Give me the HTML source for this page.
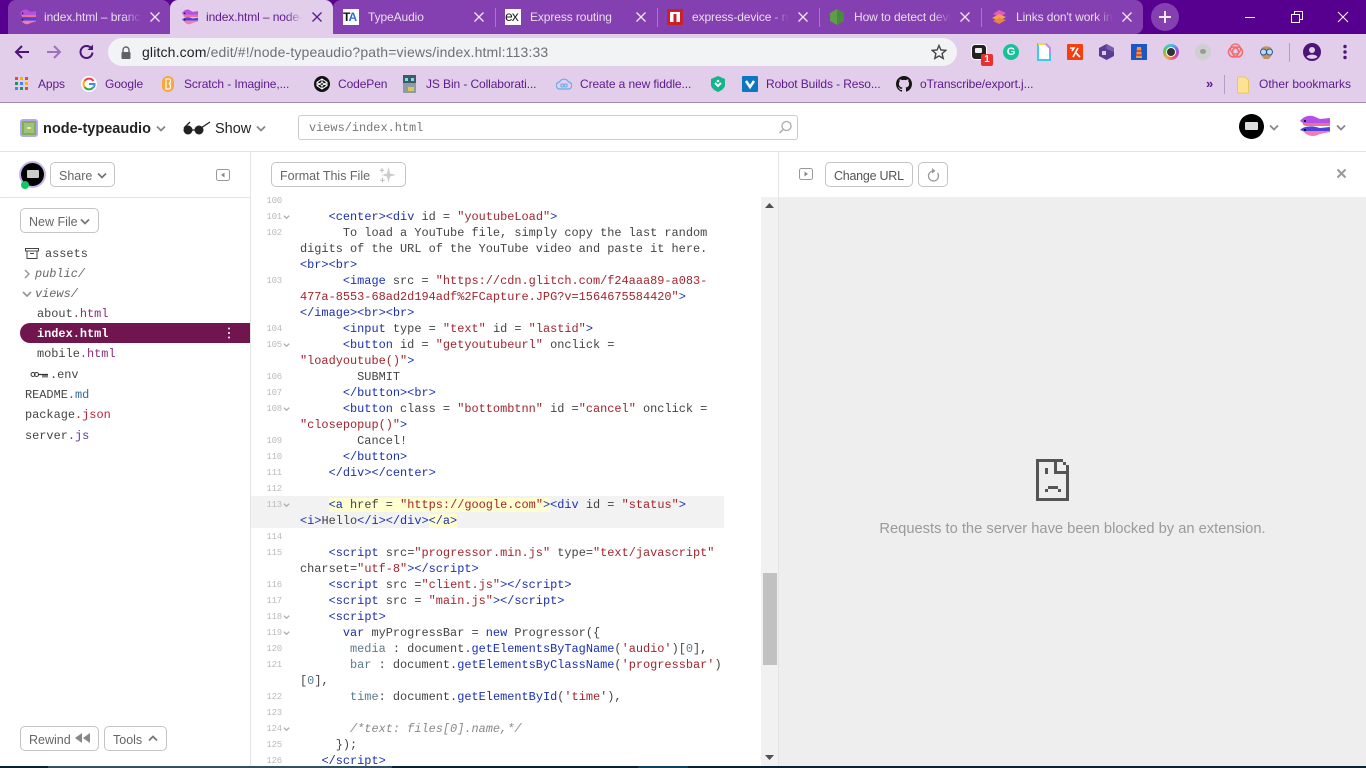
<!DOCTYPE html>
<html><head><meta charset="utf-8"><title>index.html – node-typeaudio</title>
<style>
html,body{margin:0;padding:0;width:1366px;height:768px;overflow:hidden;background:#fff;font-family:"Liberation Sans",sans-serif}
.a{position:absolute}
#frame{left:0;top:0;width:1366px;height:34px;background:#57008f}
.tab{position:absolute;top:0;height:34px;background:#8440b0}
.tt{position:absolute;top:9px;height:16px;line-height:16px;width:97px;overflow:hidden;white-space:nowrap;font-size:12px;letter-spacing:-.1px;color:#e9dcf2;-webkit-mask-image:linear-gradient(90deg,#000 82%,transparent 100%)}
.tx{position:absolute;top:10px;width:14px;height:14px}
.sep{position:absolute;top:8px;width:1px;height:19px;background:#a47cc5}
.bm{position:absolute;top:76px;height:16px;line-height:16px;font-size:12px;letter-spacing:-.1px;color:#5d1a8b;white-space:nowrap}
.btn{position:absolute;box-sizing:border-box;border:1px solid #c4c4c4;border-radius:5px;background:#fff;color:#666;font-size:12.5px;height:25px;line-height:27px;text-align:left;white-space:nowrap}
.m{position:absolute;font-family:"Liberation Mono",monospace;font-size:11.92px;line-height:16px;height:16px;white-space:pre;color:#444}
.n{position:absolute;left:251px;width:31px;text-align:right;font-family:"Liberation Mono",monospace;font-size:9px;letter-spacing:-.2px;line-height:16px;height:16px;color:#bbb}
.f{position:absolute;width:7px;height:4px;left:283px;margin-top:-1px}
.t{color:#1a2fb0}.s{color:#a3242c}.k{color:#1a2fb0}.c{color:#888;font-style:italic}.g{color:#5a7a8a}
.h{background:#ffffd0}
.fe{color:#8b2f78}.fm{color:#37639a}.fj{color:#b3223a}.fs{color:#5b3a9c}
</style></head>
<body>
<svg width="0" height="0" style="position:absolute"><defs>
<symbol id="fish" viewBox="0 0 30 22" preserveAspectRatio="none">
<path d="M0 6 C3 2 8 0 13 1 L20 4 L30 3 V8 H3 Z" fill="#b44fe8"/>
<path d="M3 8 H30 V11 H6 C4 11 2 9 3 8Z" fill="#f0708a"/>
<path d="M0 15 C3 12 8 11 14 11.500 L20 13 L30 12 V16 H3Z" fill="#4f40e0"/>
<path d="M3 16 H30 V17 L20 19 C14 22 8 22 3 16Z" fill="#f57ab0"/>
<rect x="4" y="5" width="2" height="2" fill="#111"/>
<rect x="4" y="14" width="2" height="2" fill="#111"/>
</symbol>
<symbol id="x" viewBox="0 0 14 14"><path d="M2.500 2.500 11.500 11.500M11.500 2.500 2.500 11.500" stroke="currentColor" stroke-width="1.300" fill="none"/></symbol>
<symbol id="chev" viewBox="0 0 10 6"><path d="M1 1 5 5 9 1" fill="none" stroke="currentColor" stroke-width="1.800"/></symbol>
</defs></svg>

<!-- tab strip -->
<div class="a" id="frame"></div>
<div class="tab" style="left:8px;width:162px;border-radius:8px 8px 0 0"></div>
<div class="tab" style="left:333px;width:810px;border-radius:8px 8px 8px 0"></div>
<div class="tab" style="left:170px;width:163px;background:#e2cdeb;border-radius:8px 8px 0 0"></div>
<div class="sep" style="left:495px"></div><div class="sep" style="left:657px"></div><div class="sep" style="left:819px"></div><div class="sep" style="left:981px"></div>

<svg class="a" style="left:20px;top:9px" width="16" height="16"><use href="#fish"/></svg>
<div class="tt" style="left:44px">index.html – branch</div>
<svg class="tx" style="left:148px;color:#f0e6f6"><use href="#x"/></svg>

<svg class="a" style="left:182px;top:9px" width="16" height="16"><use href="#fish"/></svg>
<div class="tt" style="left:206px;color:#5d1a8b">index.html – node-typeaudio</div>
<svg class="tx" style="left:310px;color:#5d1a8b"><use href="#x"/></svg>

<div class="a" style="left:343px;top:9px;width:16px;height:16px;background:#fff;font:bold 12px/16px 'Liberation Sans',sans-serif;letter-spacing:-1px;overflow:hidden"><span style="color:#111">T</span><span style="color:#2a6fd6">A</span></div>
<div class="tt" style="left:368px">TypeAudio</div>
<svg class="tx" style="left:472px;color:#f0e6f6"><use href="#x"/></svg>

<div class="a" style="left:505px;top:9px;width:16px;height:16px;background:#fff;font:14px/15px 'Liberation Sans',sans-serif;letter-spacing:-1px;color:#222;overflow:hidden">ex</div>
<div class="tt" style="left:530px">Express routing</div>
<svg class="tx" style="left:634px;color:#f0e6f6"><use href="#x"/></svg>

<svg class="a" style="left:667px;top:9px" width="16" height="16"><rect width="16" height="16" fill="#cb2027"/><rect x="3" y="3" width="10" height="10" fill="#fff"/><rect x="6.500" y="5" width="3" height="8" fill="#cb2027"/></svg>
<div class="tt" style="left:692px">express-device - npm</div>
<svg class="tx" style="left:796px;color:#f0e6f6"><use href="#x"/></svg>

<svg class="a" style="left:829px;top:8px" width="16" height="18"><path d="M8 1 15 5V13L8 17 1 13V5Z" fill="#5f9e48"/><path d="M8 1 15 5V13L8 17Z" fill="#4a8a3a"/></svg>
<div class="tt" style="left:854px">How to detect device</div>
<svg class="tx" style="left:958px;color:#f0e6f6"><use href="#x"/></svg>

<svg class="a" style="left:991px;top:9px" width="16" height="16"><path d="M2 5 8 1 15 4 9 8Z" fill="#e65ac0"/><path d="M1 9 8 5 15 8 8 12Z" fill="#f5a04a"/><path d="M2 12 8 9 15 11 8 15Z" fill="#e8844a"/></svg>
<div class="tt" style="left:1016px">Links don't work in</div>
<svg class="tx" style="left:1120px;color:#f0e6f6"><use href="#x"/></svg>

<div class="a" style="left:1151px;top:3px;width:28px;height:28px;border-radius:50%;background:#8440b0"></div>
<svg class="a" style="left:1158px;top:10px" width="14" height="14"><path d="M7 1V13M1 7H13" stroke="#f3ebf8" stroke-width="2"/></svg>
<svg class="a" style="left:1245px;top:12px" width="11" height="10"><path d="M0 5.500H10" stroke="#fff" stroke-width="1"/></svg>
<svg class="a" style="left:1291px;top:11px" width="12" height="12"><path d="M.5 3.500H8.500V11.500H.5ZM3.500 3.500V.5H11.500V8.500H8.500" fill="none" stroke="#fff"/></svg>
<svg class="a" style="left:1337px;top:11px" width="12" height="12"><path d="M1 1 11 11M11 1 1 11" stroke="#fff" stroke-width="1"/></svg>

<!-- toolbar -->
<div class="a" style="left:0;top:34px;width:1366px;height:68px;background:#e2cdeb"></div>
<div class="a" style="left:0;top:102px;width:1366px;height:1px;background:#a08ab0"></div>
<svg class="a" style="left:13px;top:43px" width="18" height="18"><path d="M16 9H3M9 3 3 9 9 15" fill="none" stroke="#4b1479" stroke-width="2"/></svg>
<svg class="a" style="left:45px;top:43px" width="18" height="18"><path d="M2 9H15M9 3 15 9 9 15" fill="none" stroke="#9c72bd" stroke-width="2"/></svg>
<svg class="a" style="left:78px;top:43px" width="18" height="18"><path d="M14.500 9.500A6 6 0 1 1 12.800 4.800" fill="none" stroke="#4b1479" stroke-width="2"/><path d="M15 1.500V7H9.500Z" fill="#4b1479"/></svg>
<div class="a" style="left:108px;top:38px;width:849px;height:28px;border-radius:14px;background:#f1f3f4"></div>
<svg class="a" style="left:120px;top:46px" width="12" height="14"><path d="M3 6V4A3 3 0 0 1 9 4V6" fill="none" stroke="#5f6368" stroke-width="1.400"/><rect x="1.500" y="6" width="9" height="7" rx="1" fill="#5f6368"/></svg>
<div class="a" style="left:142px;top:44px;font-size:14px;letter-spacing:.15px;line-height:17px;white-space:nowrap;color:#6e7074"><span style="color:#202124">glitch.com</span>/edit/#!/node-typeaudio?path=views/index.html:113:33</div>
<svg class="a" style="left:931px;top:44px" width="16" height="16"><path d="M8 1.500 9.900 6 14.800 6.400 11.100 9.600 12.200 14.400 8 11.900 3.800 14.400 4.900 9.600 1.200 6.400 6.100 6Z" fill="none" stroke="#444" stroke-width="1.400"/></svg>

<!-- extensions -->
<div class="a" style="left:971px;top:44px;width:16px;height:16px;background:#222;border-radius:4px;border:1px solid #fff;box-sizing:border-box"></div>
<div class="a" style="left:975px;top:48px;width:7px;height:5px;background:#eee;border-radius:1px"></div>
<div class="a" style="left:981px;top:54px;width:12px;height:12px;background:#e8312f;border-radius:2px;color:#fff;font:bold 10px/12px 'Liberation Sans',sans-serif;text-align:center">1</div>
<div class="a" style="left:1003px;top:44px;width:16px;height:16px;border-radius:50%;background:#15c39a;color:#fff;font:bold 11px/16px 'Liberation Sans',sans-serif;text-align:center">G</div>
<svg class="a" style="left:1036px;top:42px" width="16" height="20"><path d="M2 2H10L14 6V18H2Z" fill="#fff" stroke="#3ecbe8" stroke-width="2"/><path d="M2 2H10" stroke="#f6d44a" stroke-width="2"/><path d="M10 2 14 6V12" fill="none" stroke="#c78ae8" stroke-width="2"/></svg>
<div class="a" style="left:1067px;top:44px;width:16px;height:16px;background:#f4400f;border-radius:1px"></div>
<svg class="a" style="left:1067px;top:44px" width="16" height="16"><path d="M3 4H7L5 7M11 4 6 13M9 9 13 13" fill="none" stroke="#fff" stroke-width="1.600"/></svg>
<svg class="a" style="left:1098px;top:43px" width="17" height="18"><path d="M8.500 1 16 5V13L8.500 17 1 13V5Z" fill="#5c3a92"/><path d="M4 8H8V12H4Z" fill="#d9cdec"/><path d="M8.500 1 16 5V9L8.500 6Z" fill="#7c5cb0"/></svg>
<svg class="a" style="left:1131px;top:44px" width="16" height="16"><rect width="16" height="16" fill="#1a56c8"/><path d="M6 3H10L11 14H5Z" fill="#e2a23a"/><path d="M5.500 6H10.500V8H5.500ZM5 10H11V12H5Z" fill="#e8453c"/></svg>
<div class="a" style="left:1163px;top:44px;width:16px;height:16px;border-radius:50%;background:conic-gradient(#3bc7e8,#8a5ce8,#e84a8a,#f0a83a,#5ac85a,#3bc7e8)"></div>
<div class="a" style="left:1166px;top:47px;width:10px;height:10px;border-radius:50%;background:#333;border:1px solid #fff;box-sizing:border-box"></div>
<div class="a" style="left:1195px;top:44px;width:16px;height:16px;border-radius:50%;background:#cfcfcf"></div>
<div class="a" style="left:1200px;top:49px;width:6px;height:5px;border-radius:50%;background:#999"></div>
<svg class="a" style="left:1227px;top:43px" width="17" height="18"><circle cx="6.500" cy="9" r="5" fill="none" stroke="#f26a6a" stroke-width="1.500"/><circle cx="10.500" cy="9" r="5" fill="none" stroke="#f26a6a" stroke-width="1.500"/><circle cx="8.500" cy="6" r="5" fill="none" stroke="#f26a6a" stroke-width="1.200"/></svg>
<svg class="a" style="left:1258px;top:43px" width="17" height="18"><path d="M3 7C3 2 14 2 14 7V12L11 16H6L3 12Z" fill="#c49560"/><circle cx="5.500" cy="9" r="3" fill="#bcdcf0" stroke="#2a5a9a"/><circle cx="11.500" cy="9" r="3" fill="#bcdcf0" stroke="#2a5a9a"/></svg>
<div class="a" style="left:1289px;top:43px;width:1px;height:19px;background:#b49cc8"></div>
<svg class="a" style="left:1303px;top:43px" width="18" height="18"><circle cx="9" cy="9" r="9" fill="#4b1479"/><circle cx="9" cy="7" r="3" fill="#e2cdeb"/><path d="M3.500 14C5 10.800 13 10.800 14.500 14 11.500 16.500 6.500 16.500 3.500 14Z" fill="#e2cdeb"/></svg>
<svg class="a" style="left:1343px;top:44px" width="4" height="16"><circle cx="2" cy="2.500" r="1.700" fill="#4b1479"/><circle cx="2" cy="8" r="1.700" fill="#4b1479"/><circle cx="2" cy="13.500" r="1.700" fill="#4b1479"/></svg>

<!-- bookmarks -->
<svg class="a" style="left:15px;top:77px" width="14" height="14"><g><rect width="3" height="3" fill="#e8453c"/><rect x="5" width="3" height="3" fill="#f4b400"/><rect x="10" width="3" height="3" fill="#e8453c"/><rect y="5" width="3" height="3" fill="#0f9d58"/><rect x="5" y="5" width="3" height="3" fill="#4285f4"/><rect x="10" y="5" width="3" height="3" fill="#f4b400"/><rect y="10" width="3" height="3" fill="#4285f4"/><rect x="5" y="10" width="3" height="3" fill="#0f9d58"/><rect x="10" y="10" width="3" height="3" fill="#e8453c"/></g></svg>
<div class="bm" style="left:38px">Apps</div>
<svg class="a" style="left:81px;top:76px" width="16" height="16"><circle cx="8" cy="8" r="8" fill="#fff"/><path d="M12.500 5A5.500 5.500 0 0 0 3.500 5" fill="none" stroke="#e8453c" stroke-width="2"/><path d="M3.500 5A5.500 5.500 0 0 0 3.500 11" fill="none" stroke="#f4b400" stroke-width="2"/><path d="M3.500 11A5.500 5.500 0 0 0 12.500 11" fill="none" stroke="#34a853" stroke-width="2"/><path d="M8 8H13.500C13.500 10 13 11 12.500 11" fill="none" stroke="#4285f4" stroke-width="2"/></svg>
<div class="bm" style="left:105px">Google</div>
<svg class="a" style="left:161px;top:75px" width="14" height="18"><rect x="1" y="1" width="12" height="16" rx="6" fill="#f9a63a"/><path d="M5 4H8.500C10 4 10 8 8 8.500 10 9 10 14 8 14H5Z" fill="none" stroke="#fff" stroke-width="1.200"/></svg>
<div class="bm" style="left:184px">Scratch - Imagine,...</div>
<svg class="a" style="left:314px;top:76px" width="16" height="16"><circle cx="8" cy="8" r="8" fill="#111"/><path d="M8 3 13 6.300V9.700L8 13 3 9.700V6.300ZM3 6.300 8 9.700 13 6.300M8 3V6.300L3 9.700M8 6.300 13 9.700M8 9.700V13" fill="none" stroke="#fff" stroke-width="1"/></svg>
<div class="bm" style="left:338px">CodePen</div>
<svg class="a" style="left:403px;top:75px" width="13" height="18"><rect width="13" height="18" fill="#8e9ba3"/><rect y="0" width="13" height="8" fill="#3d5a6b"/><rect x="2" y="3" width="3" height="3" fill="#7de0f0"/><rect x="8" y="3" width="3" height="3" fill="#7de0f0"/><rect x="5" y="12" width="6" height="4" fill="#d8c75a"/></svg>
<div class="bm" style="left:426px">JS Bin - Collaborati...</div>
<svg class="a" style="left:556px;top:76px" width="16" height="16"><path d="M4 13A3.500 3.500 0 0 1 3.500 6 5 5 0 0 1 12.500 6 3.500 3.500 0 0 1 12 13Z" fill="none" stroke="#6aa8e8" stroke-width="1.200"/><circle cx="6.300" cy="9.500" r="1.500" fill="none" stroke="#6aa8e8"/><circle cx="9.700" cy="9.500" r="1.500" fill="none" stroke="#6aa8e8"/></svg>
<div class="bm" style="left:580px">Create a new fiddle...</div>
<svg class="a" style="left:710px;top:76px" width="16" height="16"><path d="M8 0 15 3V9C15 12 11 15 8 16 5 15 1 12 1 9V3Z" fill="#12b58a"/><path d="M5 7 8 10 11 7" fill="none" stroke="#fff" stroke-width="2"/><circle cx="8" cy="5" r="1.300" fill="#fff"/></svg>
<svg class="a" style="left:742px;top:76px" width="16" height="16"><rect width="16" height="16" rx="1" fill="#0e75c0"/><path d="M4 5 8 11 12 5" fill="none" stroke="#fff" stroke-width="2.500"/></svg>
<div class="bm" style="left:766px">Robot Builds - Reso...</div>
<svg class="a" style="left:896px;top:76px" width="16" height="16" viewBox="0 0 16 16"><path fill="#161514" d="M8 0C3.580 0 0 3.580 0 8c0 3.540 2.290 6.530 5.470 7.590.4.070.55-.17.55-.38v-1.340c-2.230.48-2.700-1.070-2.700-1.070-.36-.93-.89-1.170-.89-1.170-.73-.5.050-.49.050-.49.800.060 1.230.830 1.230.830.720 1.220 1.870.870 2.330.660.070-.520.280-.870.510-1.070-1.780-.200-3.640-.890-3.640-3.950 0-.870.310-1.590.820-2.150-.080-.200-.360-1.020.080-2.120 0 0 .670-.210 2.200.820a7.600 7.600 0 0 1 4 0c1.530-1.040 2.200-.820 2.200-.820.440 1.100.160 1.920.080 2.120.510.560.820 1.270.820 2.150 0 3.070-1.870 3.750-3.650 3.950.290.250.540.730.540 1.480v2.200c0 .210.150.460.550.380A8.010 8.010 0 0 0 16 8c0-4.420-3.580-8-8-8z"/></svg>
<div class="bm" style="left:920px">oTranscribe/export.j...</div>
<div class="bm" style="left:1206px;font-weight:bold;font-size:13px">»</div>
<div class="a" style="left:1224px;top:75px;width:1px;height:19px;background:#b49cc8"></div>
<svg class="a" style="left:1236px;top:76px" width="14" height="18"><path d="M1.500 1H9L12.500 4V17H1.500Z" fill="#fde293" stroke="#e9c85a"/></svg>
<div class="bm" style="left:1259px;letter-spacing:0">Other bookmarks</div>

<!-- glitch top bar -->
<div class="a" style="left:20px;top:119px;width:18px;height:18px;border-radius:3px;background:#b8a4ec"></div>
<div class="a" style="left:22px;top:121px;width:14px;height:14px;background:#9ec27a;box-sizing:border-box;border:2px solid #7cb05a"></div>
<div class="a" style="left:27px;top:127px;width:4px;height:2px;background:#eeee88"></div>
<div class="a" style="left:43px;top:120px;font-size:14.5px;line-height:18px;font-weight:bold;color:#222;white-space:nowrap">node-typeaudio</div>
<svg class="a" style="left:156px;top:125px;color:#888" width="10" height="7"><use href="#chev"/></svg>
<svg class="a" style="left:183px;top:120px" width="28" height="16"><circle cx="5" cy="10" r="4.500" fill="#222"/><circle cx="16" cy="10" r="4.500" fill="#222"/><path d="M1 8 7 2M9 10H12M18 8 27 2" fill="none" stroke="#222" stroke-width="1.300"/></svg>
<div class="a" style="left:215px;top:120px;font-size:14.5px;line-height:18px;color:#222">Show</div>
<svg class="a" style="left:256px;top:125px;color:#888" width="10" height="7"><use href="#chev"/></svg>
<div class="a" style="left:298px;top:115px;width:500px;height:25px;box-sizing:border-box;border:1px solid #ccc;border-radius:3px"></div>
<div class="m" style="left:309px;top:120px;color:#777">views/index.html</div>
<svg class="a" style="left:778px;top:120px" width="15" height="15"><circle cx="8.500" cy="6" r="4.500" fill="none" stroke="#aaa" stroke-width="1.300"/><path d="M5 9.500 1.500 13" stroke="#aaa" stroke-width="1.500"/></svg>
<div class="a" style="left:1239px;top:114px;width:25px;height:25px;border-radius:50%;background:#000"></div>
<div class="a" style="left:1245px;top:122px;width:13px;height:8px;background:#ddd;border-radius:1px"></div>
<svg class="a" style="left:1269px;top:124px;color:#888" width="10" height="7"><use href="#chev"/></svg>
<svg class="a" style="left:1300px;top:115px" width="30" height="22"><use href="#fish"/></svg>
<svg class="a" style="left:1336px;top:124px;color:#888" width="10" height="7"><use href="#chev"/></svg>

<!-- horizontal and vertical rules -->
<div class="a" style="left:0;top:151px;width:1366px;height:1px;background:#e3e3e3"></div>
<div class="a" style="left:250px;top:152px;width:1px;height:614px;background:#e3e3e3"></div>
<div class="a" style="left:0;top:197px;width:250px;height:1px;background:#e3e3e3"></div>
<div class="a" style="left:778px;top:152px;width:1px;height:614px;background:#e3e3e3"></div>

<!-- left panel -->
<div class="a" style="left:19px;top:161px;width:27px;height:27px;border-radius:50%;background:#c9b4ec"></div>
<div class="a" style="left:21px;top:163px;width:23px;height:23px;border-radius:50%;background:#000"></div>
<div class="a" style="left:27px;top:170px;width:12px;height:8px;background:#ccc;border-radius:1px"></div>
<div class="a" style="left:21px;top:181px;width:8px;height:8px;border-radius:50%;background:#12c768"></div>
<div class="btn" style="left:50px;top:162px;width:65px;padding-left:8px">Share</div>
<svg class="a" style="left:97px;top:172px;color:#777" width="10" height="7"><use href="#chev"/></svg>
<svg class="a" style="left:216px;top:169px" width="14" height="13"><rect x=".5" y=".5" width="13" height="11" rx="2" fill="none" stroke="#999"/><path d="M8.500 3.500V8.500L5 6Z" fill="#888"/></svg>
<div class="btn" style="left:20px;top:208px;width:79px;padding-left:8px">New File</div>
<svg class="a" style="left:80px;top:218px;color:#777" width="10" height="7"><use href="#chev"/></svg>

<svg class="a" style="left:25px;top:247px" width="14" height="12"><path d="M.5 1.500H13.500V4H.5ZM2 4V11.500H12V4M5 6.500H9" fill="none" stroke="#444"/></svg>
<div class="m" style="left:45px;top:246px">assets</div>
<svg class="a" style="left:24px;top:269px" width="7" height="10"><path d="M1 1 5 5 1 9" fill="none" stroke="#999" stroke-width="1.500"/></svg>
<div class="m" style="left:35px;top:266px;font-style:italic;color:#666">public/</div>
<svg class="a" style="left:22px;top:291px;color:#999" width="10" height="6"><use href="#chev"/></svg>
<div class="m" style="left:35px;top:286px;font-style:italic;color:#666">views/</div>
<div class="m" style="left:37px;top:306px">about<span class="fe">.html</span></div>
<div class="a" style="left:20px;top:323px;width:230px;height:20px;background:#70154e;border-radius:10px 0 0 10px"></div>
<div class="m" style="left:37px;top:326px;color:#fff;font-weight:bold">index.html</div>
<svg class="a" style="left:227px;top:327px" width="4" height="12"><circle cx="2" cy="1.500" r="1" fill="#fff"/><circle cx="2" cy="6" r="1" fill="#fff"/><circle cx="2" cy="10.500" r="1" fill="#fff"/></svg>
<div class="m" style="left:37px;top:346px">mobile<span class="fe">.html</span></div>
<svg class="a" style="left:30px;top:370px" width="19" height="9"><circle cx="3" cy="4.500" r="2" fill="none" stroke="#333"/><circle cx="6.500" cy="4.500" r="2" fill="none" stroke="#333"/><path d="M8 4.500H18M13 5V7.500M15 5V7.500M17 5V7.500" stroke="#333" stroke-width="1.200"/></svg>
<div class="m" style="left:50px;top:367px">.env</div>
<div class="m" style="left:25px;top:387px">README<span class="fm">.md</span></div>
<div class="m" style="left:25px;top:407px">package<span class="fj">.json</span></div>
<div class="m" style="left:25px;top:428px">server<span class="fs">.js</span></div>

<div class="btn" style="left:20px;top:726px;width:79px;padding-left:8px">Rewind</div>
<svg class="a" style="left:75px;top:733px" width="15" height="10"><path d="M7 0V10L0 5ZM15 0V10L8 5Z" fill="#888"/></svg>
<div class="btn" style="left:104px;top:726px;width:63px;padding-left:8px">Tools</div>
<svg class="a" style="left:148px;top:735px;color:#777;transform:scaleY(-1)" width="10" height="7"><use href="#chev"/></svg>

<!-- editor toolbar -->
<div class="btn" style="left:271px;top:162px;width:135px;padding-left:8px">Format This File</div>
<svg class="a" style="left:379px;top:165px" width="18" height="19"><path d="M9.500 2 11 8.500 17 10 11 11.500 9.500 18 8 11.500 2.500 10 8 8.500Z" fill="#ccc"/><path d="M3 3V7.500M.8 5.200H5.200M3.500 13V17.500M1.300 15.200H5.700" stroke="#bbb"/></svg>

<!-- right panel -->
<svg class="a" style="left:799px;top:168px" width="14" height="13"><rect x=".5" y=".5" width="13" height="11" rx="2" fill="none" stroke="#999"/><path d="M5.500 3.500V8.500L9 6Z" fill="#888"/></svg>
<div class="btn" style="left:825px;top:162px;width:88px;padding-left:8px;color:#555;letter-spacing:-.25px">Change URL</div>
<div class="btn" style="left:918px;top:162px;width:30px"></div>
<svg class="a" style="left:926px;top:168px" width="14" height="15"><path d="M11.500 5A5 5 0 1 1 7 3" fill="none" stroke="#999" stroke-width="1.300"/><path d="M6 0 9.500 3 6 5.500Z" fill="#999"/></svg>
<svg class="a" style="left:1336px;top:168px" width="11" height="11"><path d="M1.500 1.500 9.500 9.500M9.500 1.500 1.500 9.500" stroke="#999" stroke-width="2"/></svg>
<div class="a" style="left:779px;top:197px;width:587px;height:569px;background:#eee"></div>
<svg class="a" style="left:1036px;top:459px" width="33" height="42" shape-rendering="crispEdges" fill="#555"><rect x="0" y="0" width="27" height="3"/><rect x="0" y="0" width="3" height="42"/><rect x="0" y="39" width="33" height="3"/><rect x="30" y="6" width="3" height="36"/><rect x="18" y="0" width="3" height="15"/><rect x="18" y="12" width="15" height="3"/><rect x="27" y="3" width="3" height="3"/><rect x="9" y="9" width="3" height="6"/><rect x="12" y="27" width="10" height="3"/><rect x="9" y="30" width="3" height="3"/><rect x="22" y="30" width="3" height="3"/></svg>
<div class="a" style="left:779px;top:520px;width:587px;text-align:center;font-size:14.7px;line-height:18px;color:#9a9a9a">Requests to the server have been blocked by an extension.</div>

<!-- editor -->
<div class="a" style="left:251px;top:496px;width:473px;height:32px;background:#f2f2f2"></div>
<div class="a" style="left:761px;top:197px;width:17px;height:569px;background:#f1f1f1"></div>
<div class="a" style="left:763px;top:573px;width:14px;height:92px;background:#c1c1c1"></div>
<svg class="a" style="left:765px;top:203px" width="9" height="6"><path d="M4.500 0 9 5H0Z" fill="#505050"/></svg>
<svg class="a" style="left:765px;top:755px" width="9" height="6"><path d="M4.500 5 9 0H0Z" fill="#505050"/></svg>

<div class="a" style="left:251px;top:197px;width:510px;height:569px;overflow:hidden">
<div class="a" style="left:-251px;top:-196px;width:1366px;height:768px">
<div class="n" style="top:192px">100</div>
<div class="n" style="top:208px">101</div>
<div class="n" style="top:224px">102</div>
<div class="n" style="top:272px">103</div>
<div class="n" style="top:320px">104</div>
<div class="n" style="top:336px">105</div>
<div class="n" style="top:368px">106</div>
<div class="n" style="top:384px">107</div>
<div class="n" style="top:400px">108</div>
<div class="n" style="top:432px">109</div>
<div class="n" style="top:448px">110</div>
<div class="n" style="top:464px">111</div>
<div class="n" style="top:480px">112</div>
<div class="n" style="top:496px">113</div>
<div class="n" style="top:528px">114</div>
<div class="n" style="top:544px">115</div>
<div class="n" style="top:576px">116</div>
<div class="n" style="top:592px">117</div>
<div class="n" style="top:608px">118</div>
<div class="n" style="top:624px">119</div>
<div class="n" style="top:640px">120</div>
<div class="n" style="top:656px">121</div>
<div class="n" style="top:688px">122</div>
<div class="n" style="top:704px">123</div>
<div class="n" style="top:720px">124</div>
<div class="n" style="top:736px">125</div>
<div class="n" style="top:752px">126</div>

<svg class="f" style="top:215px;color:#aaa"><use href="#chev"/></svg>
<svg class="f" style="top:343px;color:#aaa"><use href="#chev"/></svg>
<svg class="f" style="top:407px;color:#aaa"><use href="#chev"/></svg>
<svg class="f" style="top:503px;color:#aaa"><use href="#chev"/></svg>
<svg class="f" style="top:615px;color:#aaa"><use href="#chev"/></svg>
<svg class="f" style="top:631px;color:#aaa"><use href="#chev"/></svg>
<svg class="f" style="top:727px;color:#aaa"><use href="#chev"/></svg>

<div class="m" style="left:300px;top:208px">    <span class="t">&lt;center&gt;&lt;div</span> id = <span class="s">"youtubeLoad"</span><span class="t">&gt;</span></div>
<div class="m" style="left:300px;top:224px">      To load a YouTube file, simply copy the last random</div>
<div class="m" style="left:300px;top:240px">digits of the URL of the YouTube video and paste it here.</div>
<div class="m" style="left:300px;top:256px"><span class="t">&lt;br&gt;&lt;br&gt;</span></div>
<div class="m" style="left:300px;top:272px">      <span class="t">&lt;image</span> src = <span class="s">"https://cdn.glitch.com/f24aaa89-a083-</span></div>
<div class="m" style="left:300px;top:288px"><span class="s">477a-8553-68ad2d194adf%2FCapture.JPG?v=1564675584420"</span><span class="t">&gt;</span></div>
<div class="m" style="left:300px;top:304px"><span class="t">&lt;/image&gt;&lt;br&gt;&lt;br&gt;</span></div>
<div class="m" style="left:300px;top:320px">      <span class="t">&lt;input</span> type = <span class="s">"text"</span> id = <span class="s">"lastid"</span><span class="t">&gt;</span></div>
<div class="m" style="left:300px;top:336px">      <span class="t">&lt;button</span> id = <span class="s">"getyoutubeurl"</span> onclick =</div>
<div class="m" style="left:300px;top:352px"><span class="s">"loadyoutube()"</span><span class="t">&gt;</span></div>
<div class="m" style="left:300px;top:368px">        SUBMIT</div>
<div class="m" style="left:300px;top:384px">      <span class="t">&lt;/button&gt;&lt;br&gt;</span></div>
<div class="m" style="left:300px;top:400px">      <span class="t">&lt;button</span> class = <span class="s">"bottombtnn"</span> id =<span class="s">"cancel"</span> onclick =</div>
<div class="m" style="left:300px;top:416px"><span class="s">"closepopup()"</span><span class="t">&gt;</span></div>
<div class="m" style="left:300px;top:432px">        Cancel!</div>
<div class="m" style="left:300px;top:448px">      <span class="t">&lt;/button&gt;</span></div>
<div class="m" style="left:300px;top:464px">    <span class="t">&lt;/div&gt;&lt;/center&gt;</span></div>
<div class="m" style="left:300px;top:496px">    <span class="h"><span class="t">&lt;a</span> href = <span class="s">"https://google.com"</span><span class="t">&gt;</span></span><span class="t">&lt;div</span> id = <span class="s">"status"</span><span class="t">&gt;</span></div>
<div class="m" style="left:300px;top:512px"><span class="t">&lt;i&gt;</span>Hello<span class="t">&lt;/i&gt;&lt;/div&gt;</span><span class="h t">&lt;/a&gt;</span></div>
<div class="m" style="left:300px;top:544px">    <span class="t">&lt;script</span> src=<span class="s">"progressor.min.js"</span> type=<span class="s">"text/javascript"</span></div>
<div class="m" style="left:300px;top:560px">charset=<span class="s">"utf-8"</span><span class="t">&gt;&lt;/script&gt;</span></div>
<div class="m" style="left:300px;top:576px">    <span class="t">&lt;script</span> src =<span class="s">"client.js"</span><span class="t">&gt;&lt;/script&gt;</span></div>
<div class="m" style="left:300px;top:592px">    <span class="t">&lt;script</span> src = <span class="s">"main.js"</span><span class="t">&gt;&lt;/script&gt;</span></div>
<div class="m" style="left:300px;top:608px">    <span class="t">&lt;script&gt;</span></div>
<div class="m" style="left:300px;top:624px">      <span class="k">var</span> myProgressBar = <span class="k">new</span> Progressor({</div>
<div class="m" style="left:300px;top:640px">       <span class="g">media</span> : document.<span class="t">getElementsByTagName</span>(<span class="s">'audio'</span>)[<span class="g">0</span>],</div>
<div class="m" style="left:300px;top:656px">       <span class="g">bar</span> : document.<span class="t">getElementsByClassName</span>(<span class="s">'progressbar'</span>)</div>
<div class="m" style="left:300px;top:672px">[<span class="g">0</span>],</div>
<div class="m" style="left:300px;top:688px">       <span class="g">time</span>: document.<span class="t">getElementById</span>(<span class="s">'time'</span>),</div>
<div class="m" style="left:300px;top:720px">       <span class="c">/*text: files[0].name,*/</span></div>
<div class="m" style="left:300px;top:736px">     });</div>
<div class="m" style="left:300px;top:752px">   <span class="t">&lt;/script&gt;</span></div>
</div></div>

<!-- bottom strip -->
<div class="a" style="left:0;top:766px;width:1366px;height:2px;background:#0b2233"></div>
<div class="a" style="left:48px;top:766px;width:344px;height:2px;background:#34505f"></div>
<div class="a" style="left:638px;top:766px;width:50px;height:2px;background:#123f60"></div>
</body></html>
